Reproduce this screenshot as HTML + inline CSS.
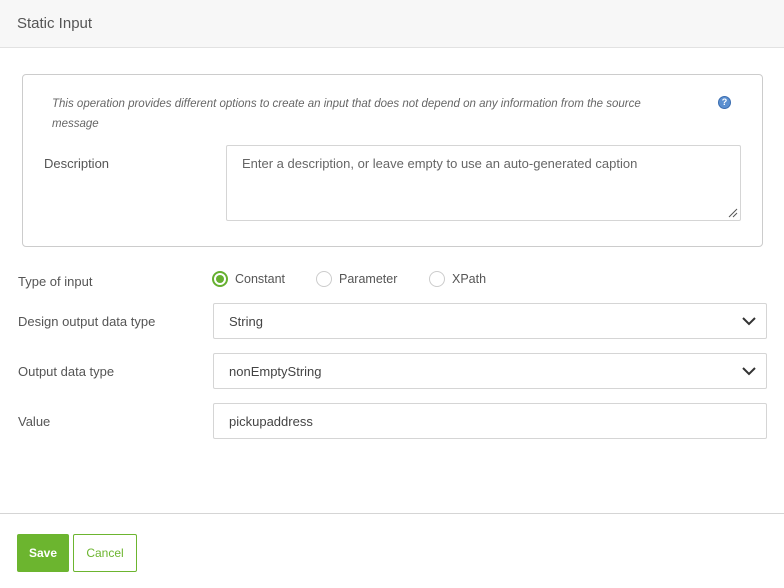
<!DOCTYPE html>
<html><head><style>
*{box-sizing:border-box;margin:0;padding:0}
body{width:784px;height:588px;background:#fff;font-family:"Liberation Sans",sans-serif;color:#555;position:relative;overflow:hidden;font-size:13px}
.abs{position:absolute}
.hdr{left:0;top:0;width:784px;height:48px;background:#f7f7f7;border-bottom:1px solid #e2e2e2}
.hdr span{position:absolute;left:17px;top:15px;font-size:15px;color:#555}
.box{left:22px;top:74px;width:741px;height:173px;border:1px solid #ccc;border-radius:4px}
.inp{border:1px solid #d5d5d5;background:#fff;border-radius:2px}
.lbl{font-size:13px;color:#555}
.radio{width:16px;height:16px;border-radius:50%;border:1px solid #ccc;background:#fff}
.chev{position:absolute;right:10px;top:12px}
</style></head><body>
<div class="abs hdr"><span>Static Input</span></div>
<div class="abs box"></div>
<div class="abs" style="left:52px;top:94px;font-size:11.5px;font-style:italic;color:#666;line-height:20px;width:625px">This operation provides different options to create an input that does not depend on any information from the source message</div>
<div class="abs" style="left:718px;top:96px;width:13px;height:13px;border-radius:50%;background:#5b8fd0;border:1px solid #3b6db0;color:#fff;font-size:9px;font-weight:bold;text-align:center;line-height:11px">?</div>
<div class="abs lbl" style="left:44px;top:156px">Description</div>
<div class="abs inp" style="left:226px;top:145px;width:515px;height:76px"><div style="position:absolute;left:15px;top:10px;color:#666">Enter a description, or leave empty to use an auto-generated caption</div>
<svg style="position:absolute;right:2px;bottom:2px" width="10" height="10"><path d="M1 9L9 1M5 9L9 5" stroke="#555"/></svg></div>
<div class="abs lbl" style="left:18px;top:274px">Type of input</div>
<div class="abs radio" style="left:212px;top:271px;border:2px solid #66b030;background:#fff"><div style="position:absolute;left:2px;top:2px;width:8px;height:8px;border-radius:50%;background:#66b030"></div></div>
<div class="abs lbl" style="left:235px;top:272px;font-size:12.5px">Constant</div>
<div class="abs radio" style="left:316px;top:271px"></div>
<div class="abs lbl" style="left:339px;top:272px;font-size:12.5px">Parameter</div>
<div class="abs radio" style="left:429px;top:271px"></div>
<div class="abs lbl" style="left:452px;top:272px;font-size:12.5px">XPath</div>
<div class="abs lbl" style="left:18px;top:314px">Design output data type</div>
<div class="abs inp" style="left:213px;top:303px;width:554px;height:36px"><div style="position:absolute;left:15px;top:10px;color:#444">String</div><svg class="chev" width="14" height="10"><path d="M1 2L7 8L13 2" stroke="#333" stroke-width="2" fill="none"/></svg></div>
<div class="abs lbl" style="left:18px;top:364px">Output data type</div>
<div class="abs inp" style="left:213px;top:353px;width:554px;height:36px"><div style="position:absolute;left:15px;top:10px;color:#444">nonEmptyString</div><svg class="chev" width="14" height="10"><path d="M1 2L7 8L13 2" stroke="#333" stroke-width="2" fill="none"/></svg></div>
<div class="abs lbl" style="left:18px;top:414px">Value</div>
<div class="abs inp" style="left:213px;top:403px;width:554px;height:36px"><div style="position:absolute;left:15px;top:10px;color:#444">pickupaddress</div></div>
<div class="abs" style="left:0;top:513px;width:784px;height:1px;background:#d5d5d5"></div>
<div class="abs" style="left:17px;top:534px;width:52px;height:38px;background:#6cb52f;border-radius:2px;color:#fff;font-weight:bold;font-size:12px;text-align:center;line-height:38px">Save</div>
<div class="abs" style="left:73px;top:534px;width:64px;height:38px;border:1px solid #6cb52f;border-radius:2px;color:#6cb52f;font-size:12px;text-align:center;line-height:36px">Cancel</div>
</body></html>
